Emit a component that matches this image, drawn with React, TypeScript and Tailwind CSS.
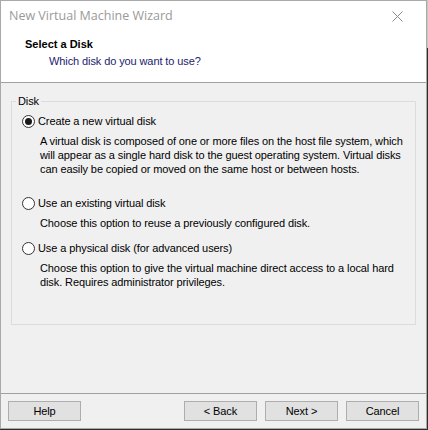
import React from 'react';

const ui = { fontFamily: '"Liberation Sans", Arial, sans-serif' };

function Radio({ checked }: { checked?: boolean }) {
  return (
    <span className="w-[13px] h-[13px] rounded-full border border-[#333333] bg-white flex items-center justify-center shrink-0">
      {checked && <span className="w-[7px] h-[7px] rounded-full bg-[#1a1a1a]" />}
    </span>
  );
}

function Option({ label, lines, checked }: { label: string; lines: string[]; checked?: boolean }) {
  return (
    <div className="flex flex-col">
      <div className="flex items-center gap-[3px] h-[14px]">
        <Radio checked={checked} />
        <span>{label}</span>
      </div>
      <div className="pl-[18px] mt-[4px] flex flex-col">
        {lines.map((l) => (
          <span key={l} className="h-[14px] whitespace-nowrap">
            {l}
          </span>
        ))}
      </div>
    </div>
  );
}

function Button({ children }: { children: React.ReactNode }) {
  return (
    <button className="w-[73px] h-[20px] bg-[#e1e1e1] border border-[#adadad] text-[11px] text-[#000000] flex items-center justify-center">
      {children}
    </button>
  );
}

export default function App() {
  return (
    <div className="w-[428px] h-[430px] bg-[#2e2e2e] flex text-[11px] text-[#000000] tracking-[-0.1px]" style={ui}>
      <div className="w-[427px] h-[429px] border border-[#a9a9a9] bg-[#f0f0f0] flex flex-col">
        <div className="h-[31px] bg-white flex items-center justify-between pl-[8px] pr-[23px]">
          <span
            className="text-[12.5px] text-[#9a9a9a] tracking-normal"
            style={{ fontFamily: '"Open Sans", "Noto Sans", sans-serif' }}
          >
            New Virtual Machine Wizard
          </span>
          <svg width="11" height="11" viewBox="0 0 11 11" className="text-[#8a8a8a] -mt-[1px]">
            <path d="M0.5 0.5 L10.5 10.5 M10.5 0.5 L0.5 10.5" stroke="currentColor" strokeWidth="1" />
          </svg>
        </div>
        <div className="h-[51px] bg-white border-b border-[#a0a0a0] flex flex-col pt-[5px]">
          <span className="pl-[24px] font-bold h-[14px] leading-[14px] tracking-normal">Select a Disk</span>
          <span className="pl-[48px] mt-[2px] text-[#1b1b6e]">Which disk do you want to use?</span>
        </div>
        <div className="flex-1 px-[10px] pt-[10px]">
          <fieldset className="border border-[#dcdcdc] h-[232px] px-[10px] pb-[6px]">
            <legend className="px-[2px] -ml-[6px]">Disk</legend>
            <div className="flex flex-col gap-[13px] mt-[5px]">
              <div className="-mb-[4px] pb-[13px]">
                <Option
                  checked
                  label="Create a new virtual disk"
                  lines={[
                    'A virtual disk is composed of one or more files on the host file system, which',
                    'will appear as a single hard disk to the guest operating system. Virtual disks',
                    'can easily be copied or moved on the same host or between hosts.',
                  ]}
                />
              </div>
              <Option
                label="Use an existing virtual disk"
                lines={['Choose this option to reuse a previously configured disk.']}
              />
              <Option
                label="Use a physical disk (for advanced users)"
                lines={[
                  'Choose this option to give the virtual machine direct access to a local hard',
                  'disk. Requires administrator privileges.',
                ]}
              />
            </div>
          </fieldset>
        </div>
        <div className="h-[35px] border-t border-[#a0a0a0] flex items-start px-[7px] pt-[7px]">
          <Button>Help</Button>
          <div className="flex-1" />
          <div className="flex gap-[8px]">
            <Button>&lt; Back</Button>
            <Button>Next &gt;</Button>
            <Button>Cancel</Button>
          </div>
        </div>
      </div>
      <div className="w-[1px] flex flex-col">
        <div className="h-[48px] bg-[#c8c8c8]" />
      </div>
    </div>
  );
}
